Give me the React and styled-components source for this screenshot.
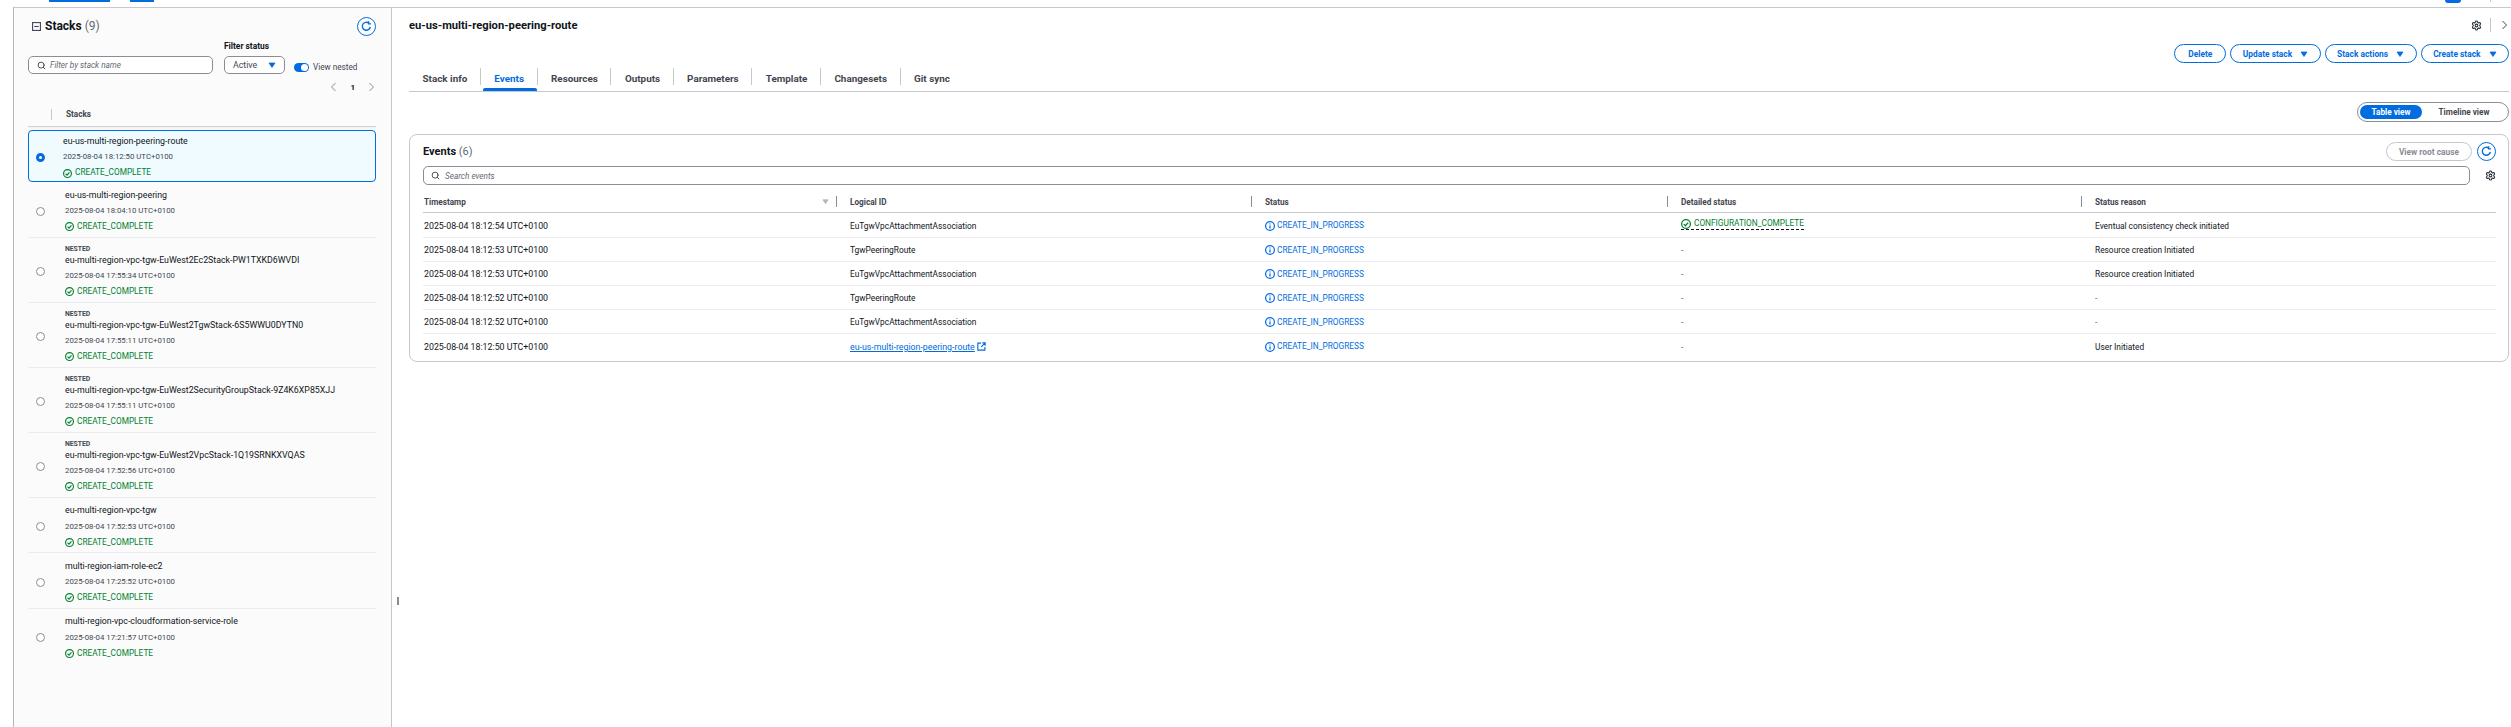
import styled, { createGlobalStyle } from 'styled-components';
import { Search, Settings } from 'lucide-react';

const stacks = [
  { name: 'eu-us-multi-region-peering-route', time: '2025-08-04 18:12:50 UTC+0100', selected: true },
  { name: 'eu-us-multi-region-peering', time: '2025-08-04 18:04:10 UTC+0100' },
  { name: 'eu-multi-region-vpc-tgw-EuWest2Ec2Stack-PW1TXKD6WVDI', time: '2025-08-04 17:55:34 UTC+0100', nested: true },
  { name: 'eu-multi-region-vpc-tgw-EuWest2TgwStack-6S5WWU0DYTN0', time: '2025-08-04 17:55:11 UTC+0100', nested: true },
  { name: 'eu-multi-region-vpc-tgw-EuWest2SecurityGroupStack-9Z4K6XP85XJJ', time: '2025-08-04 17:55:11 UTC+0100', nested: true },
  { name: 'eu-multi-region-vpc-tgw-EuWest2VpcStack-1Q19SRNKXVQAS', time: '2025-08-04 17:52:56 UTC+0100', nested: true },
  { name: 'eu-multi-region-vpc-tgw', time: '2025-08-04 17:52:53 UTC+0100' },
  { name: 'multi-region-iam-role-ec2', time: '2025-08-04 17:25:52 UTC+0100' },
  { name: 'multi-region-vpc-cloudformation-service-role', time: '2025-08-04 17:21:57 UTC+0100' },
];

const events = [
  { time: '2025-08-04 18:12:54 UTC+0100', id: 'EuTgwVpcAttachmentAssociation', detail: 'CONFIGURATION_COMPLETE', reason: 'Eventual consistency check initiated' },
  { time: '2025-08-04 18:12:53 UTC+0100', id: 'TgwPeeringRoute', reason: 'Resource creation Initiated' },
  { time: '2025-08-04 18:12:53 UTC+0100', id: 'EuTgwVpcAttachmentAssociation', reason: 'Resource creation Initiated' },
  { time: '2025-08-04 18:12:52 UTC+0100', id: 'TgwPeeringRoute' },
  { time: '2025-08-04 18:12:52 UTC+0100', id: 'EuTgwVpcAttachmentAssociation' },
  { time: '2025-08-04 18:12:50 UTC+0100', id: 'eu-us-multi-region-peering-route', link: true, reason: 'User Initiated' },
];

const tabs = ['Stack info', 'Events', 'Resources', 'Outputs', 'Parameters', 'Template', 'Changesets', 'Git sync'];

const Caret = ({ size = 8 }) => (
  <svg width={size} height={size} viewBox="0 0 16 16">
    <path d="M2 4h12L8 13z" fill="currentColor" stroke="currentColor" strokeWidth="1.5" strokeLinejoin="round" />
  </svg>
);

const Chevron = ({ left, color = '#8c8c94' }) => (
  <svg width="9" height="10" viewBox="0 0 9 10" fill="none">
    <path d={left ? 'M6.5 1L2.5 5l4 4' : 'M2.5 1l4 4-4 4'} stroke={color} strokeWidth="1" />
  </svg>
);

const RefreshIcon = () => (
  <svg width="11" height="11" viewBox="0 0 16 16" fill="none" stroke="currentColor" strokeWidth="2">
    <path d="M13.5 8.5A5.8 5.8 0 1 1 11.5 3.2" />
    <path d="M11 0.5v3.6h3.6" />
  </svg>
);

const SuccessIcon = ({ size = 9 }) => (
  <svg width={size} height={size} viewBox="0 0 16 16" fill="none" stroke="currentColor" strokeWidth="2">
    <circle cx="8" cy="8" r="7" />
    <path d="M4.5 8.2l2.6 2.6 4.4-5" />
  </svg>
);

const InfoIcon = () => (
  <svg width="10" height="10" viewBox="0 0 16 16" fill="none" stroke="currentColor" strokeWidth="2">
    <circle cx="8" cy="8" r="7" />
    <path d="M8 7v5M8 4v1.6" />
  </svg>
);

const ExternalIcon = () => (
  <svg width="9" height="9" viewBox="0 0 16 16" fill="none" stroke="currentColor" strokeWidth="2">
    <path d="M7 2H1.5v12.5H14V9" />
    <path d="M9.5 1.5h5v5M14.5 1.5L7.5 8.5" />
  </svg>
);

const CollapseIcon = () => (
  <svg width="9" height="9" viewBox="0 0 16 16" fill="none" stroke="#414d5c" strokeWidth="2">
    <rect x="1" y="1" width="14" height="14" />
    <path d="M4 8h8" />
  </svg>
);

const GlobalStyle = createGlobalStyle`
  html, body {
    margin: 0;
    padding: 0;
    background: #fff;
  }
  body {
    font-family: Roboto, "Noto Sans", sans-serif;
    font-size: 8.8px;
    color: #0f141a;
  }
`;

const Page = styled.div`
  height: 727px;
  width: 2511px;
  overflow: hidden;
  display: flex;
  flex-direction: column;
`;

const TopStrip = styled.div`
  height: 7px;
  flex-shrink: 0;
  display: flex;
  align-items: flex-start;
  padding-left: 49px;
`;

const TopMark = styled.div`
  width: ${(p) => p.$w}px;
  height: 1.5px;
  margin-right: 20px;
  background: #006ce0;
`;

const TopAvatar = styled.div`
  width: 16px;
  height: 3px;
  margin-left: auto;
  background: #006ce0;
  border-radius: 0 0 8px 8px;
`;

const TopDivider = styled.div`
  width: 1px;
  height: 2px;
  margin: 0 20px 0 29px;
  background: #c6c6cd;
`;

const Body = styled.div`
  flex: 1;
  min-height: 0;
  margin-left: 13px;
  display: flex;
  border-top: 1px solid #c6c6cd;
  border-left: 1px solid #b4b4bb;
`;

const Sidebar = styled.aside`
  width: 348px;
  flex-shrink: 0;
  padding: 8px 15px 0 14px;
  background: #fbfbfb;
  border-right: 1px solid #c6c6cd;
`;

const SideHead = styled.div`
  height: 20px;
  display: flex;
  align-items: center;
  padding-left: 4px;
  gap: 4px;
`;

const SideTitle = styled.h2`
  margin: 0;
  font-size: 12px;
  font-weight: 700;
  flex: 1;
  span {
    font-weight: 400;
    color: #656871;
  }
`;

const RoundIcon = styled.button`
  width: 19px;
  height: 19px;
  padding: 0;
  flex-shrink: 0;
  display: flex;
  align-items: center;
  justify-content: center;
  color: #006ce0;
  background: #fff;
  border: 1.2px solid #006ce0;
  border-radius: 50%;
`;

const Filters = styled.div`
  display: flex;
  align-items: flex-end;
  margin-top: 5px;
`;

const FilterInput = styled.div`
  width: 185px;
  height: 18px;
  box-sizing: border-box;
  display: flex;
  align-items: center;
  gap: 4px;
  padding-left: 8px;
  background: #fff;
  border: 1px solid #8c8c94;
  border-radius: 5px;
  font-style: italic;
  color: #656871;
  font-size: 8.2px;
`;

const FilterField = styled.div`
  width: 61px;
  margin-left: 11px;
`;

const FilterLabel = styled.div`
  font-weight: 700;
  font-size: 8.4px;
  line-height: 11px;
  margin-bottom: 4px;
`;

const Select = styled.div`
  height: 18px;
  box-sizing: border-box;
  display: flex;
  align-items: center;
  justify-content: space-between;
  padding: 0 8px;
  background: #fff;
  border: 1px solid #8c8c94;
  border-radius: 5px;
  color: #424650;
  svg {
    color: #006ce0;
  }
`;

const ToggleWrap = styled.div`
  height: 14px;
  margin-left: 9px;
  display: flex;
  align-items: center;
  gap: 4px;
  color: #424650;
  font-size: 8.2px;
`;

const Toggle = styled.div`
  width: 15px;
  height: 9px;
  display: flex;
  justify-content: flex-end;
  align-items: center;
  padding-right: 1px;
  box-sizing: border-box;
  background: #006ce0;
  border-radius: 5px;
  &::after {
    content: '';
    width: 7px;
    height: 7px;
    background: #fff;
    border-radius: 50%;
  }
`;

const Pager = styled.div`
  height: 20px;
  margin-top: 3px;
  display: flex;
  align-items: center;
  justify-content: flex-end;
  gap: 12px;
  font-weight: 700;
  font-size: 8px;
`;

const StackHead = styled.div`
  height: 30px;
  box-sizing: border-box;
  padding-top: 6px;
  display: flex;
  align-items: center;
  padding-left: 23px;
  border-bottom: 1px solid #d1d1d6;
  box-shadow: 0 2px 2px -1px #eee;
  font-weight: 700;
  font-size: 8.2px;
  color: #424650;
  span {
    padding-left: 14px;
    border-left: 1px solid #c6c6cd;
    line-height: 11px;
  }
`;

const StackList = styled.div`
  margin-top: 3px;
`;

const StackRow = styled.div`
  display: flex;
  align-items: center;
  box-sizing: border-box;
  padding: ${(p) => (p.$selected ? '2.75px 0 0.25px' : '5.5px 0 2px')};
  background: ${(p) => (p.$selected ? '#f0fbff' : 'transparent')};
  border: ${(p) => (p.$selected ? '1.5px solid #006ce0' : 'none')};
  border-radius: ${(p) => (p.$selected ? '4px' : '0')};
  border-bottom: ${(p) => (p.$selected ? '1.5px solid #006ce0' : p.$last ? 'none' : '1px solid #ebebf0')};
`;

const Radio = styled.div`
  width: 9px;
  height: 9px;
  box-sizing: border-box;
  flex-shrink: 0;
  margin: 0 ${(p) => (p.$on ? '18.5px' : '20px')} 0 ${(p) => (p.$on ? '6.5px' : '8px')};
  border-radius: 50%;
  background: #fff;
  border: ${(p) => (p.$on ? '3px solid #006ce0' : '1px solid #8c8c94')};
`;

const StackInfo = styled.div`
  min-width: 0;
`;

const NestedTag = styled.div`
  padding-top: 3px;
  font-size: 6.8px;
  font-weight: 700;
  line-height: 6.5px;
  color: #424650;
`;

const StackName = styled.div`
  line-height: 15.5px;
`;

const StackTime = styled.div`
  line-height: 16px;
  font-size: 7.8px;
  color: #424650;
`;

const Status = styled.div`
  display: flex;
  align-items: center;
  gap: ${(p) => p.$gap || 3}px;
  line-height: 15.5px;
  font-size: ${(p) => p.$size || 8.3}px;
  color: ${(p) => p.$color || '#00802f'};
`;

const Main = styled.main`
  position: relative;
  flex: 1;
  min-width: 0;
  padding: 0 2px 0 17px;
`;

const Grabber = styled.div`
  position: absolute;
  left: 5px;
  top: 589px;
  width: 2px;
  height: 8px;
  background: #8c8c94;
`;

const TitleRow = styled.div`
  height: 36px;
  box-sizing: border-box;
  padding-bottom: 2px;
  display: flex;
  align-items: center;
`;

const Title = styled.h1`
  margin: 0;
  flex: 1;
  font-size: 11.2px;
  font-weight: 700;
`;

const PanelTools = styled.div`
  display: flex;
  align-items: center;
  color: #232b37;
  span {
    width: 1px;
    height: 14px;
    margin: 0 9px 0 8px;
    background: #c6c6cd;
  }
`;

const Actions = styled.div`
  display: flex;
  justify-content: flex-end;
  gap: 4px;
`;

const PillButton = styled.button`
  height: 19px;
  box-sizing: border-box;
  padding: 0 ${(p) => p.$pad || 11.5}px;
  display: flex;
  align-items: center;
  gap: 8px;
  font: inherit;
  font-size: 8.4px;
  font-weight: 700;
  color: ${(p) => (p.disabled ? '#8c8c94' : '#006ce0')};
  background: #fff;
  border: 1.2px solid ${(p) => (p.disabled ? '#c6c6cd' : '#006ce0')};
  border-radius: 10px;
`;

const TabBar = styled.nav`
  height: 29px;
  box-sizing: border-box;
  display: flex;
  border-bottom: 1px solid #c6c6cd;
`;

const Tab = styled.div`
  position: relative;
  height: 28px;
  padding: 3px 13.5px 0;
  display: flex;
  align-items: center;
  box-sizing: border-box;
  font-weight: 700;
  font-size: 9.9px;
  color: ${(p) => (p.$active ? '#006ce0' : '#424650')};
  &::after {
    content: '';
    position: absolute;
    right: 0;
    top: 5px;
    height: 17px;
    width: 1px;
    background: ${(p) => (p.$last ? 'transparent' : '#c6c6cd')};
  }
  &::before {
    content: '';
    display: ${(p) => (p.$active ? 'block' : 'none')};
    position: absolute;
    left: 2px;
    right: 1px;
    bottom: 0;
    height: 3px;
    border-radius: 2px 2px 0 0;
    background: #006ce0;
  }
`;

const ViewRow = styled.div`
  display: flex;
  justify-content: flex-end;
  margin-top: 10px;
`;

const Segmented = styled.div`
  height: 20px;
  box-sizing: border-box;
  display: flex;
  align-items: center;
  padding: 0 2px;
  background: #fff;
  border: 1px solid #8c8c94;
  border-radius: 10px;
`;

const Segment = styled.div`
  height: 14px;
  display: flex;
  align-items: center;
  justify-content: center;
  width: ${(p) => p.$w}px;
  font-weight: 700;
  font-size: 8.2px;
  color: ${(p) => (p.$active ? '#fff' : '#424650')};
  background: ${(p) => (p.$active ? '#006ce0' : 'transparent')};
  border-radius: 7px;
`;

const Card = styled.section`
  margin-top: 12px;
  box-sizing: border-box;
  height: 228px;
  padding: 7px 12px 0 13px;
  border: 1px solid #c6c6cd;
  border-radius: 8px;
`;

const CardHead = styled.div`
  height: 19px;
  display: flex;
  align-items: center;
  gap: 5px;
`;

const CardTitle = styled.h2`
  margin: 0;
  flex: 1;
  font-size: 11px;
  font-weight: 700;
  span {
    font-weight: 400;
    color: #656871;
  }
`;

const SearchRow = styled.div`
  display: flex;
  align-items: center;
  margin-top: 5px;
  gap: 15px;
  color: #232b37;
`;

const SearchInput = styled.div`
  flex: 1;
  height: 19px;
  box-sizing: border-box;
  display: flex;
  align-items: center;
  gap: 5px;
  padding-left: 7px;
  border: 1px solid #8c8c94;
  border-radius: 5px;
  font-style: italic;
  font-size: 8.2px;
  color: #656871;
`;

const Row = styled.div`
  display: grid;
  grid-template-columns: 413px 415px 416px 414px 1fr;
  align-items: center;
  height: ${(p) => p.$h || 24}px;
  padding-top: 1.5px;
  box-sizing: border-box;
  border-bottom: ${(p) => (p.$last ? 'none' : '1px solid #ebebf0')};
`;

const HeadRow = styled(Row)`
  margin-top: 6px;
  padding-top: 0;
  border-bottom: 1px solid #c6c6cd;
`;

const HeadCell = styled.div`
  position: relative;
  display: flex;
  align-items: center;
  height: 11px;
  padding-left: ${(p) => (p.$first ? '1px' : '13px')};
  font-weight: 700;
  font-size: 8.2px;
  color: #424650;
  border-left: ${(p) => (p.$first ? 'none' : '1px solid #8c8c94')};
`;

const SortMark = styled.span`
  position: absolute;
  right: 7px;
  top: 1px;
  color: #b4b4bb;
`;

const Cell = styled.div`
  padding-left: ${(p) => (p.$first ? '1px' : '14px')};
  font-size: ${(p) => (p.$small ? '8.35px' : 'inherit')};
  color: ${(p) => (p.$muted ? '#656871' : '#0f141a')};
`;

const ExtLink = styled.a`
  display: inline-flex;
  align-items: center;
  gap: 2px;
  font-size: 8.8px;
  color: #006ce0;
  text-decoration: underline;
  svg {
    flex-shrink: 0;
  }
`;

const DetailStatus = styled(Status)`
  display: inline-flex;
  line-height: 11px;
  margin-top: -3px;
  border-bottom: 1px dashed #0f141a;
`;

const App = () => (
  <Page>
    <GlobalStyle />
    <TopStrip>
      <TopMark $w={61} />
      <TopMark $w={24} />
      <TopAvatar />
      <TopDivider />
    </TopStrip>
    <Body>
      <Sidebar>
        <SideHead>
          <CollapseIcon />
          <SideTitle>
            Stacks <span>(9)</span>
          </SideTitle>
          <RoundIcon>
            <RefreshIcon />
          </RoundIcon>
        </SideHead>
        <Filters>
          <FilterInput>
            <Search size={9} color="#424650" strokeWidth={2.5} />
            Filter by stack name
          </FilterInput>
          <FilterField>
            <FilterLabel>Filter status</FilterLabel>
            <Select>
              Active
              <Caret />
            </Select>
          </FilterField>
          <ToggleWrap>
            <Toggle />
            View nested
          </ToggleWrap>
        </Filters>
        <Pager>
          <Chevron left />
          1
          <Chevron />
        </Pager>
        <StackHead>
          <span>Stacks</span>
        </StackHead>
        <StackList>
          {stacks.map((s, i) => (
            <StackRow key={s.name} $selected={s.selected} $last={i === stacks.length - 1}>
              <Radio $on={s.selected} />
              <StackInfo>
                {s.nested && <NestedTag>NESTED</NestedTag>}
                <StackName>{s.name}</StackName>
                <StackTime>{s.time}</StackTime>
                <Status>
                  <SuccessIcon />
                  CREATE_COMPLETE
                </Status>
              </StackInfo>
            </StackRow>
          ))}
        </StackList>
      </Sidebar>
      <Main>
        <Grabber />
        <TitleRow>
          <Title>eu-us-multi-region-peering-route</Title>
          <PanelTools>
            <Settings size={11} strokeWidth={2.2} />
            <span />
            <Chevron color="#424650" />
          </PanelTools>
        </TitleRow>
        <Actions>
          <PillButton $pad={13}>Delete</PillButton>
          <PillButton>
            Update stack <Caret />
          </PillButton>
          <PillButton>
            Stack actions <Caret />
          </PillButton>
          <PillButton>
            Create stack <Caret />
          </PillButton>
        </Actions>
        <TabBar>
          {tabs.map((t, i) => (
            <Tab key={t} $active={t === 'Events'} $last={i === tabs.length - 1}>
              {t}
            </Tab>
          ))}
        </TabBar>
        <ViewRow>
          <Segmented>
            <Segment $active $w={62}>Table view</Segment>
            <Segment $w={84}>Timeline view</Segment>
          </Segmented>
        </ViewRow>
        <Card>
          <CardHead>
            <CardTitle>
              Events <span>(6)</span>
            </CardTitle>
            <PillButton disabled $pad={12}>View root cause</PillButton>
            <RoundIcon>
              <RefreshIcon />
            </RoundIcon>
          </CardHead>
          <SearchRow>
            <SearchInput>
              <Search size={9} color="#424650" strokeWidth={2.5} />
              Search events
            </SearchInput>
            <Settings size={11} strokeWidth={2.2} />
          </SearchRow>
          <HeadRow $h={22}>
            <HeadCell $first>
              Timestamp
              <SortMark>
                <Caret size={7} />
              </SortMark>
            </HeadCell>
            <HeadCell>Logical ID</HeadCell>
            <HeadCell>Status</HeadCell>
            <HeadCell>Detailed status</HeadCell>
            <HeadCell>Status reason</HeadCell>
          </HeadRow>
          {events.map((e, i) => (
            <Row key={i} $h={i === 0 ? 25 : 24} $last={i === events.length - 1}>
              <Cell $first>{e.time}</Cell>
              <Cell $small>
                {e.link ? (
                  <ExtLink>
                    {e.id}
                    <ExternalIcon />
                  </ExtLink>
                ) : (
                  e.id
                )}
              </Cell>
              <Cell>
                <Status $color="#006ce0" $size={8.3} $gap={2}>
                  <InfoIcon />
                  CREATE_IN_PROGRESS
                </Status>
              </Cell>
              <Cell $muted={!e.detail}>
                {e.detail ? (
                  <DetailStatus $size={8.3} $gap={3}>
                    <SuccessIcon size={10} />
                    {e.detail}
                  </DetailStatus>
                ) : (
                  '-'
                )}
              </Cell>
              <Cell $small $muted={!e.reason}>{e.reason || '-'}</Cell>
            </Row>
          ))}
        </Card>
      </Main>
    </Body>
  </Page>
);

export default App;
